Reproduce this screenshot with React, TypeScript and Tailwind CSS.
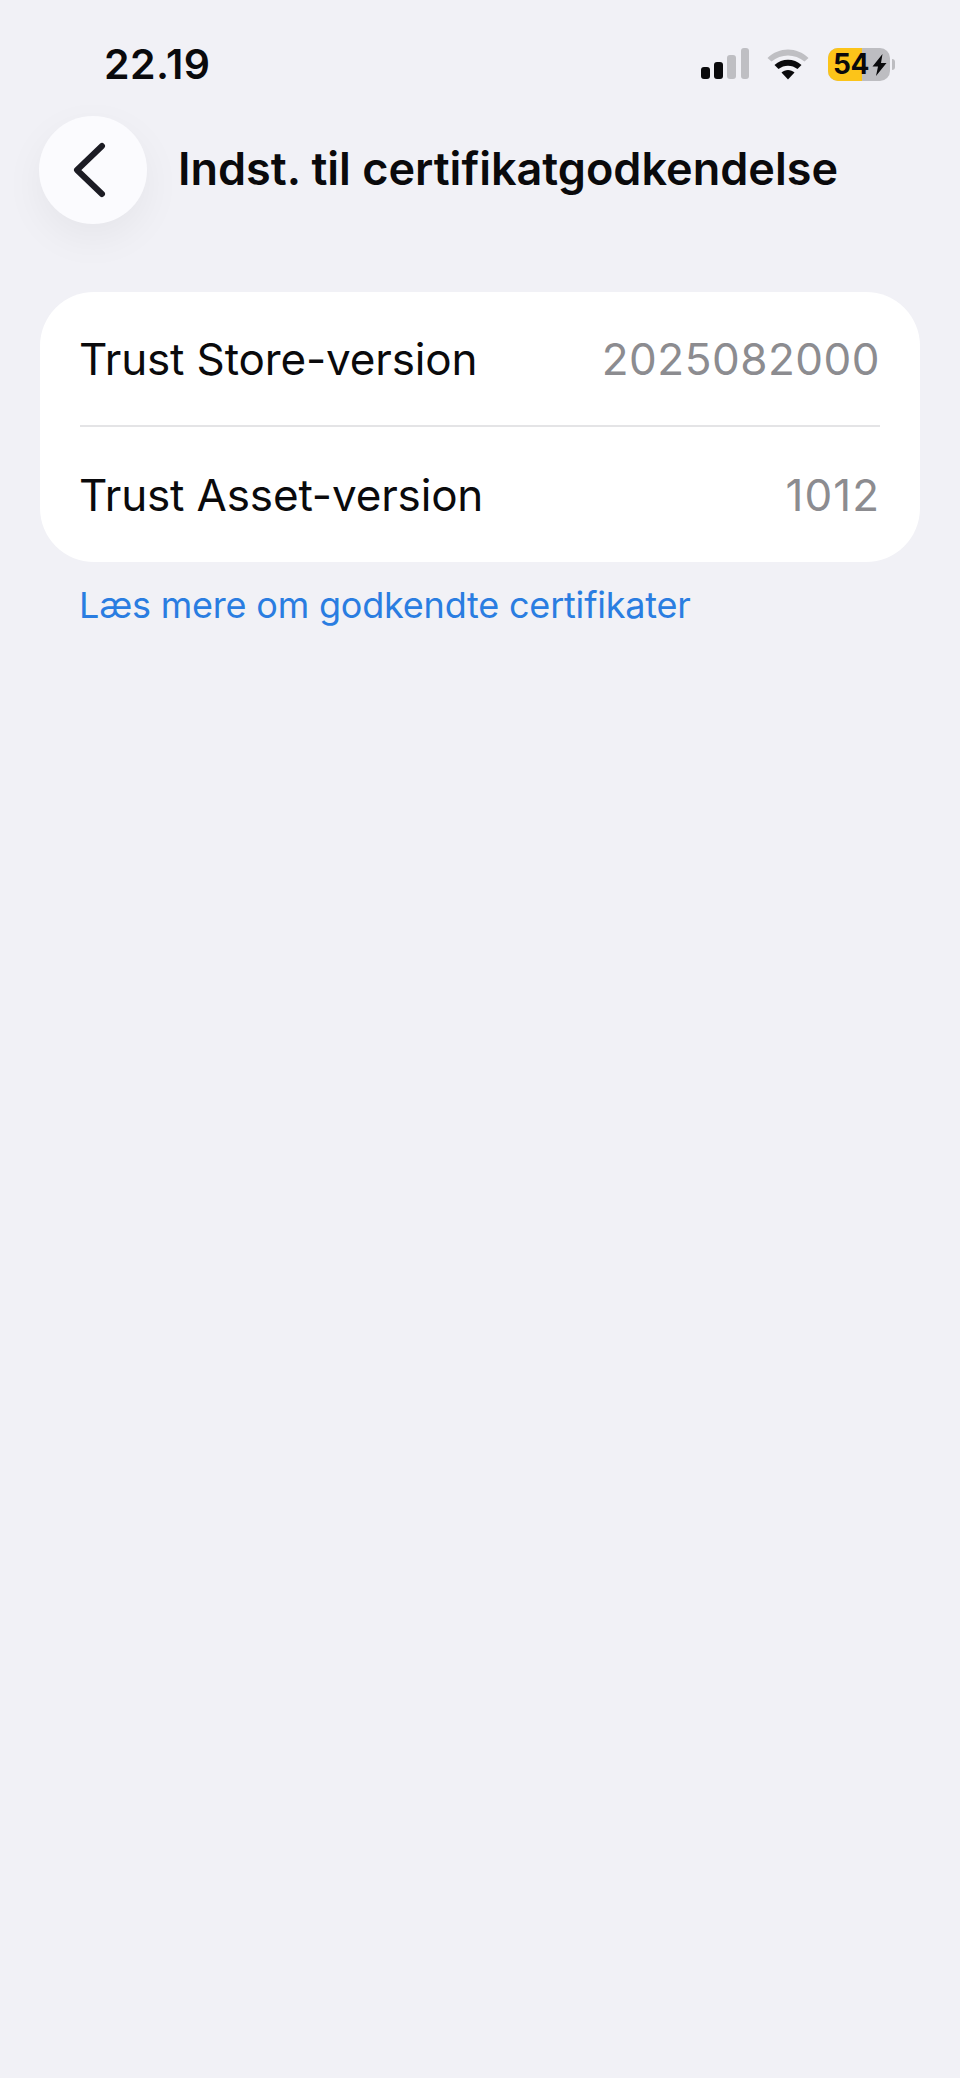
export default function App() {
  return (
    <div className="w-[960px] h-[2078px] bg-[#f1f1f6] font-['Inter',sans-serif] overflow-hidden">
      <div className="flex items-center justify-between h-[64px] mt-[32px] pl-[104px] pr-[65px]">
        <span className="text-[41px] leading-[64px] font-semibold text-[#0a0a0c] tracking-[0.5px]">22.19</span>
        <div className="flex items-center">
          <svg width="48" height="32" viewBox="0 0 48 32">
            <rect x="0" y="19" width="9" height="12" rx="3" fill="#0a0a0c" />
            <rect x="13" y="14" width="9" height="17" rx="3" fill="#0a0a0c" />
            <rect x="26" y="7" width="9" height="24" rx="3" fill="#bfbfc3" />
            <rect x="40" y="0" width="8" height="31" rx="3" fill="#bfbfc3" />
          </svg>
          <svg className="ml-[18px]" width="42" height="32" viewBox="0 0 42 32">
            <path d="M0.5 10 C 12 -1.5, 30 -1.5, 41.5 10 L 37.5 13.5 C 28 5.5, 14 5.5, 4.5 13.5 Z" fill="#bfbfc3" />
            <path d="M7.5 17 C 15 10, 27 10, 34.5 17 L 30.5 21 C 25 16.5, 17 16.5, 11.5 21 Z" fill="#0a0a0c" />
            <path d="M14.5 24.5 C 18 21, 24 21, 27.5 24.5 L 21 31.5 Z" fill="#0a0a0c" />
          </svg>
          <div className="flex items-center ml-[19px]">
            <div className="relative flex items-center w-[62px] h-[33px] rounded-[10px] overflow-hidden bg-[#bdbdc1]">
              <div className="absolute left-0 top-0 bottom-0 w-[34px] bg-[#fcc419]" />
              <span className="relative pl-[5px] text-[28px] leading-[33px] font-bold text-[#0a0a0c] tracking-[-0.5px]">54</span>
              <svg className="absolute right-[3px] top-[6px]" width="15" height="22" viewBox="0 0 15 22">
                <path d="M10.5 0 L0.5 12.5 H6 L4 22 L14.5 9 H9 Z" fill="#0a0a0c" />
              </svg>
            </div>
            <div className="w-[3px] h-[11px] ml-[2px] rounded-r-[3px] bg-[#bdbdc1]" />
          </div>
        </div>
      </div>

      <div className="flex items-center mt-[20px] pl-[39px] h-[108px]">
        <div className="flex items-center justify-center w-[108px] h-[108px] rounded-full bg-[#fbfbfe] shadow-[0_14px_40px_rgba(0,0,0,0.05)]">
          <svg className="mr-[9px]" width="36" height="56" viewBox="0 0 36 56" fill="none">
            <path d="M31 4 L6 28 L31 52" stroke="#1c1c24" strokeWidth="6" strokeLinecap="round" strokeLinejoin="round" />
          </svg>
        </div>
        <h1 className="ml-[31px] pb-[2px] text-[45px] leading-[60px] font-semibold text-[#0a0a0c] whitespace-nowrap">
          Indst. til certifikatgodkendelse
        </h1>
      </div>

      <div className="mx-[40px] mt-[68px] bg-white rounded-[54px] px-[40px]">
        <div className="flex items-center justify-between h-[135px] border-b-2 border-[#e4e4e6]">
          <span className="-ml-px text-[44px] text-[#0a0a0c] tracking-[-0.15px]">Trust Store-version</span>
          <span className="text-[44px] text-[#8c8c90] tracking-[0.5px]">2025082000</span>
        </div>
        <div className="flex items-center justify-between h-[135px]">
          <span className="-ml-px text-[44px] text-[#0a0a0c] tracking-[-0.15px]">Trust Asset-version</span>
          <span className="text-[44px] text-[#8c8c90] tracking-[1px]">1012</span>
        </div>
      </div>

      <div className="mt-[17px] pl-[79px] text-[36px] leading-[52px] text-[#2a7de1] tracking-[-0.2px]">
        Læs mere om godkendte certifikater
      </div>
    </div>
  );
}
